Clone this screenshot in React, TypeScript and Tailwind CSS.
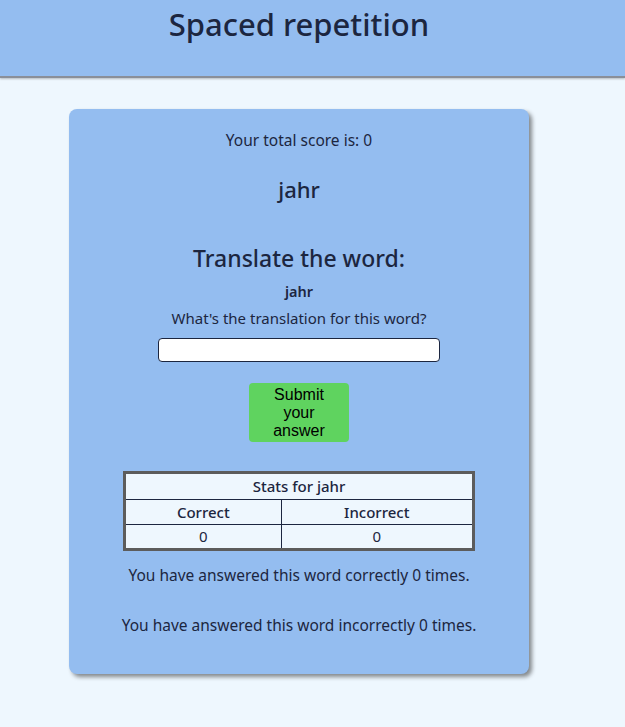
import React from 'react';

const font = "font-['Noto_Sans',_'Open_Sans',_sans-serif]";

export default function App() {
  const word = 'jahr';
  const score = 0;
  const correct = 0;
  const incorrect = 0;

  return (
    <div className={`min-h-[727px] w-[625px] bg-[#eef7fe] text-[#1c2640] ${font}`}>
      <header className="h-[78px] w-full bg-[#94bdf0] border-b-2 border-[#8a8f99] shadow-[0_1px_2px_rgba(0,0,0,0.25)]">
        <h1 className="w-[598px] pt-[2px] text-center text-[31px] font-medium leading-[44px]">Spaced repetition</h1>
      </header>

      <div className="w-[598px] pt-[31px] flex justify-center">
        <div className="w-[460px] h-[565px] rounded-[8px] bg-[#94bdf0] shadow-[3px_3px_4px_rgba(0,0,0,0.45)] flex flex-col items-center pt-[19px]">
          <p className="text-[15.5px] leading-[24px]">Your total score is: {score}</p>
          <h2 className="mt-[22px] text-[22px] font-medium leading-[30px]">{word}</h2>
          <h3 className="mt-[39px] text-[23px] font-medium leading-[30px]">Translate the word:</h3>
          <p className="mt-[7px] text-[14.5px] font-semibold leading-[22px]">{word}</p>
          <p className="mt-[5px] text-[15px] leading-[22px]">What's the translation for this word?</p>
          <input
            type="text"
            className="mt-[9px] w-[282px] h-[24px] rounded-[4px] border border-[#1c2640] bg-white px-1 outline-none"
          />
          <button
            type="button"
            className="mt-[21px] w-[100px] h-[59px] rounded-[4px] bg-[#5fd35f] text-black text-[16px] leading-[18px] font-['Liberation_Sans',_Arial,_sans-serif] px-5"
          >
            Submit your answer
          </button>

          <table className="mt-[29px] w-[352px] border-collapse border-[3px] border-solid border-[#5c5c5c] bg-[#eef7fe] text-center text-[15px]">
            <thead>
              <tr>
                <th colSpan={2} className="h-[27px] border border-[#1c2640] font-medium">Stats for {word}</th>
              </tr>
              <tr>
                <th className="h-[25px] border border-[#1c2640] font-medium">Correct</th>
                <th className="h-[25px] border border-[#1c2640] font-medium">Incorrect</th>
              </tr>
            </thead>
            <tbody>
              <tr>
                <td className="h-[25px] border border-[#1c2640]">{correct}</td>
                <td className="h-[25px] border border-[#1c2640]">{incorrect}</td>
              </tr>
            </tbody>
          </table>

          <p className="mt-[12px] text-[15.5px] leading-[24px]">You have answered this word correctly {correct} times.</p>
          <p className="mt-[26px] text-[15.5px] leading-[24px]">You have answered this word incorrectly {incorrect} times.</p>
        </div>
      </div>
    </div>
  );
}
